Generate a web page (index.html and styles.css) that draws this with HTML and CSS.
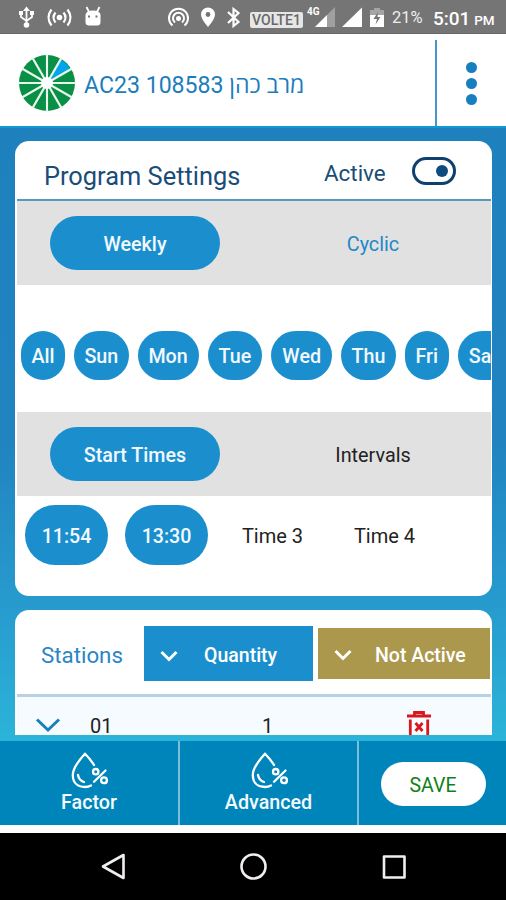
FILE: index.html
```html
<!DOCTYPE html>
<html lang="en">
<head>
<meta charset="utf-8">
<title>Program Settings</title>
<link rel="stylesheet" href="styles.css">
</head>
<body>
<div class="phone">
  <div class="status">
    <svg class="status-left" width="110" height="34" viewBox="0 0 110 34" fill="none" stroke="#fff" stroke-width="1.8">
      <path d="M26.500 9V25M21 13V17L26.500 21L32 17V13"/>
      <path d="M23 11L26.500 6.500L30 11ZM19 11H23V15H19ZM30 11H34V15H30Z" fill="#fff" stroke="none"/>
      <circle cx="26.500" cy="25" r="2.800" fill="#fff" stroke="none"/>
      <circle cx="59.500" cy="17.500" r="2.800" fill="#fff" stroke="none"/>
      <path d="M55.500 12.500Q51.500 17.500 55.500 22.500M63.500 12.500Q67.500 17.500 63.500 22.500M51.500 9.500Q45.500 17.500 51.500 25.500M67.500 9.500Q73.500 17.500 67.500 25.500" stroke-width="2.200"/>
      <path d="M85.500 15Q86 10.500 93 10.500T100.500 15V22Q100.500 25.500 97 25.500H89Q85.500 25.500 85.500 22Z" fill="#fff" stroke="none"/>
      <path d="M89 12L86.500 7M97 12L99.500 7"/>
      <path d="M88 16.500H90M95.500 16.500H97.500" stroke="#757575"/>
    </svg>
    <svg class="status-mid" width="76" height="34" viewBox="0 0 76 34" fill="none" stroke="#fff" stroke-width="2">
      <circle cx="11.500" cy="18.500" r="2.500" fill="#fff" stroke="none"/>
      <path d="M8 22.500A5.500 5.500 0 1 1 15 22.500M5.500 25.500A9.500 9.500 0 1 1 17.500 25.500"/>
      <path d="M41 27Q34 19 34 14.500A7 7 0 0 1 48 14.500Q48 19 41 27Z" fill="#fff" stroke="none"/>
      <circle cx="41" cy="14.500" r="2.400" fill="#757575" stroke="none"/>
      <path d="M61 12L71.500 22L66.500 26V9L71.500 13L61 23" stroke-width="2.200"/>
    </svg>
    <span class="volte">VOLTE1</span>
    <span class="net">4G</span>
    <svg class="signal" width="84" height="34" viewBox="0 0 84 34">
      <path d="M9 27L29 7V27Z" fill="#a0a0a0"/><path d="M9 27L21 15V27Z" fill="#fff"/>
      <path d="M36 27L56 7.500V27Z" fill="#fff"/>
      <path d="M64 10H68V8H74V10H78V15H64Z" fill="#a5a5a5"/><path d="M64 15H78V27H64Z" fill="#fff"/>
      <path d="M72 12L67.500 19H71L69.500 24.500L74.500 17H71.500Z" fill="#757575"/>
    </svg>
    <span class="battery">21%</span>
    <span class="clock">5:01 <small>PM</small></span>
  </div>

  <header class="header">
    <svg class="logo" width="58" height="58" viewBox="-29 -29 58 58">
      <circle r="28" fill="#0a9046"/>
      <path d="M0 0L13.500 -23.380A27 27 0 0 1 23.380 -13.500Z" fill="#05a5ee"/>
      <path d="M0-29V29M-29 0H29M-14.500-25.110L14.500 25.110M14.500-25.110L-14.500 25.110M-25.110-14.500L25.110 14.500M25.110-14.500L-25.110 14.500" stroke="#e9f8ec" stroke-width="2.100"/>
      <circle r="6" fill="#fff"/>
    </svg>
    <span class="title">AC23 108583 מרב כהן</span>
    <div class="more"><i></i><i></i><i></i></div>
  </header>

  <main class="main">
    <section class="card settings">
      <div class="card-head">
        <h1>Program Settings</h1>
        <span class="active">Active</span>
        <span class="toggle"></span>
      </div>
      <div class="band">
        <span class="pill">Weekly</span>
        <span class="option cyclic">Cyclic</span>
      </div>
      <div class="days">
        <span class="day narrow">All</span><span class="day">Sun</span><span class="day wide">Mon</span><span class="day">Tue</span><span class="day wide">Wed</span><span class="day">Thu</span><span class="day narrow">Fri</span><span class="day last">Sa</span>
      </div>
      <div class="band">
        <span class="pill start">Start Times</span>
        <span class="option intervals">Intervals</span>
      </div>
      <div class="times">
        <span class="time on">11:54</span><span class="time on">13:30</span><span class="time">Time 3</span><span class="time">Time 4</span>
      </div>
    </section>

    <section class="card stations">
      <div class="stations-head">
        <h2>Stations</h2>
        <span class="select quantity"><svg width="18" height="12" viewBox="0 0 18 12"><path d="M1.500 2L9 9.500L16.500 2"/></svg><b>Quantity</b></span>
        <span class="select inactive"><svg width="18" height="12" viewBox="0 0 18 12"><path d="M1.500 2L9 9.500L16.500 2"/></svg><b>Not Active</b></span>
      </div>
      <div class="station">
        <svg class="expand" width="26" height="15" viewBox="0 0 26 15"><path d="M2 1.500L13 12L24 1.500"/></svg>
        <span class="number">01</span>
        <span class="amount">1</span>
        <svg class="trash" width="24" height="28" viewBox="0 0 24 28" fill="none" stroke="#d9171d">
          <path d="M0 5H24M7.500 4.500V1.500H16.500V4.500" stroke-width="2.800"/>
          <path d="M3.300 8.500V26H20.700V8.500" stroke-width="2.800"/>
          <path d="M8.500 12L15.500 20M15.500 12L8.500 20" stroke-width="2.800"/>
        </svg>
      </div>
    </section>
  </main>

  <footer class="actions">
    <div class="action">
      <svg width="38" height="38" viewBox="0 0 38 38" fill="none" stroke="#fff" stroke-width="2.3" stroke-linecap="round">
        <path d="M24 13Q21 8 15 1.800Q2.800 15 2.800 23C2.800 31 8 35 15 35Q18.500 35 21 33.500"/>
        <path d="M8 23Q9 28.500 14 30M24 29.700L35.500 18.500"/>
        <circle cx="25.700" cy="19.700" r="2.700"/><circle cx="34" cy="28.300" r="2.900"/>
      </svg>
      <span>Factor</span>
    </div>
    <div class="action">
      <svg width="38" height="38" viewBox="0 0 38 38" fill="none" stroke="#fff" stroke-width="2.3" stroke-linecap="round">
        <path d="M24 13Q21 8 15 1.800Q2.800 15 2.800 23C2.800 31 8 35 15 35Q18.500 35 21 33.500"/>
        <path d="M8 23Q9 28.500 14 30M24 29.700L35.500 18.500"/>
        <circle cx="25.700" cy="19.700" r="2.700"/><circle cx="34" cy="28.300" r="2.900"/>
      </svg>
      <span>Advanced</span>
    </div>
    <div class="action save-cell"><span class="save">SAVE</span></div>
  </footer>

  <nav class="nav">
    <svg width="506" height="67" viewBox="0 0 506 67" fill="none" stroke="#f2eeee" stroke-width="2.600" stroke-linejoin="round">
      <path d="M123.500 22V45L103 33.500Z"/>
      <circle cx="253.500" cy="33.500" r="12"/>
      <rect x="384" y="23.500" width="20.500" height="21"/>
    </svg>
  </nav>
</div>
</body>
</html>
```
FILE: styles.css
```css
* { box-sizing: border-box; }

body {
  margin: 0;
  font-family: Roboto, "Open Sans", sans-serif;
  font-size: 20px;
  color: #222;
}

svg { display: block; flex: none; }

span, h1, h2, b { white-space: nowrap; }

.phone {
  width: 506px;
  height: 900px;
  overflow: hidden;
  display: flex;
  flex-direction: column;
  background: #fff;
}

.status {
  height: 34px;
  flex: none;
  display: flex;
  align-items: center;
  background: #757575;
  border-bottom: 1px solid #666;
  color: #fff;
}

.status-left { margin-right: 57px; }

.volte {
  width: 53px;
  height: 16px;
  margin: 6px 0 0 7px;
  border-radius: 2px;
  background: #e6e6e6;
  color: #686868;
  font-size: 14px;
  font-weight: 500;
  line-height: 17px;
  text-align: center;
}

.net {
  width: 14px;
  margin: -9px -10px 0 4px;
  font-size: 10px;
  font-weight: 700;
  line-height: 12px;
}

.signal { margin-left: -5px; }

.battery {
  width: 41px;
  margin: 2px 0 0 2px;
  font-size: 16.5px;
  color: #eee;
}

.clock { margin-top: 4px; font-size: 19px; font-weight: 500; }
.clock small { font-size: 13.5px; margin-left: -1px; }

.header {
  height: 92px;
  flex: none;
  display: flex;
  align-items: center;
  padding: 6px 0 0 18px;
}

.title {
  width: 350px;
  margin: 2px 0 0 8px;
  font-size: 23.1px;
  color: #1c7dbd;
}

.more {
  width: 71px;
  height: 86px;
  margin-left: 1px;
  border-left: 2px solid #4994cc;
  display: flex;
  flex-direction: column;
  align-items: center;
  justify-content: center;
  gap: 5px;
}

.more i {
  width: 11px;
  height: 11px;
  border-radius: 50%;
  background: #167fbf;
}

.main {
  height: 615px;
  flex: none;
  padding: 13px 14px 6px 15px;
  border-top: 2px solid #1199d3;
  background: linear-gradient(#1f80be 0%, #2184c1 52%, #279bce 78%, #2bb4d9 100%);
  display: flex;
  flex-direction: column;
  gap: 14px;
}

.card { background: #fff; border-radius: 14px; padding: 0 1px 0 2px; }

.settings { height: 455px; }

.card-head {
  height: 60px;
  display: flex;
  align-items: center;
  border-bottom: 2px solid #5599bd;
  color: #194d78;
}

h1 {
  width: 280px;
  margin: 11px 0 0 27px;
  font-size: 25.4px;
  font-weight: 400;
}

.active { width: 88px; margin-top: 5px; font-size: 22.4px; }

.toggle {
  width: 44px;
  height: 28px;
  margin-top: 2px;
  border: 3px solid #0e416e;
  border-radius: 14px;
  display: flex;
  align-items: center;
  justify-content: flex-end;
  padding-right: 5px;
}

.toggle::after {
  content: "";
  width: 12px;
  height: 12px;
  border-radius: 50%;
  background: #0e4c80;
}

.band {
  height: 84px;
  display: flex;
  align-items: center;
  padding-left: 33px;
  background: #e1e1e1;
}

.pill {
  width: 170px;
  height: 54px;
  border-radius: 27px;
  background: #1b8fce;
  color: #f1f9ff;
  font-size: 19.7px;
  font-weight: 500;
  line-height: 58px;
  text-align: center;
}

.option { width: 306px; text-align: center; margin: 2px -40px 0 0; font-size: 19.8px; }
.cyclic { color: #2488c7; }

.days {
  height: 127px;
  padding-left: 4px;
  display: flex;
  align-items: center;
  gap: 9px;
  overflow: hidden;
}

.day {
  width: 54.6px;
  height: 49px;
  margin-top: 14px;
  flex: none;
  border-radius: 25px;
  background: #1b8fce;
  color: #f1f9ff;
  font-size: 19.7px;
  font-weight: 500;
  line-height: 52px;
  text-align: center;
}

.narrow { width: 44px; }
.wide { width: 61px; }

.last {
  width: 34px;
  padding-left: 11px;
  border-radius: 25px 0 0 25px;
  text-align: left;
}

.times { display: flex; padding: 9px 0 0 8px; gap: 17px; }

.time {
  width: 95px;
  height: 60px;
  line-height: 62px;
  text-align: center;
}

.time.on {
  width: 83px;
  border-radius: 30px;
  background: #1b8fce;
  color: #f1f9ff;
  font-size: 19.6px;
  font-weight: 500;
  line-height: 64px;
}

.stations {
  height: 125px;
  border-radius: 14px 14px 0 0;
  overflow: hidden;
}

.stations-head {
  height: 87px;
  display: flex;
  align-items: center;
  border-bottom: 3px solid #b9d1e5;
}

h2 {
  width: 103px;
  margin: 5px 0 0 24px;
  font-size: 22.3px;
  font-weight: 400;
  color: #2a86c4;
}

.select {
  width: 169px;
  height: 55px;
  margin-top: 3px;
  padding-left: 16px;
  display: flex;
  align-items: center;
  color: #fff;
}

.select b { font-size: 19.5px; font-weight: 500; margin-top: 3px; }
.select svg { fill: none; stroke: #fff; stroke-width: 3; margin-top: 4px; }
.quantity { background: #1b8fce; }
.quantity b { margin-left: 26px; }
.inactive { width: 172px; height: 51px; margin-left: 5px; margin-top: 2px; background: #ab984d; }
.inactive b { margin-left: 23px; margin-top: 5px; }

.station { height: 38px; display: flex; background: #f5fbff; }
.expand { margin: 21px 0 0 18px; fill: none; stroke: #197fbd; stroke-width: 3; }
.number { width: 172px; height: 20px; margin: 18px 0 0 29px; line-height: 23px; }
.amount { width: 145px; height: 20px; margin-top: 18px; line-height: 23px; }
.trash { margin-top: 14px; }

.actions {
  height: 84px;
  flex: none;
  display: grid;
  grid-template-columns: 180px 179px 147px;
  background: #0085bb;
  color: #f4fbff;
}

.action {
  border-right: 2px solid #7ebedb;
  display: flex;
  flex-direction: column;
  align-items: center;
  padding-top: 11px;
}

.action span { font-size: 19.7px; font-weight: 500; line-height: 26px; }

.save-cell { border: 0; padding: 21px 0 0 1px; }

.action .save {
  width: 105px;
  height: 44px;
  border-radius: 22px;
  background: #fff;
  color: #118018;
  font-size: 19.5px;
  font-weight: 400;
  line-height: 48px;
  text-align: center;
}

.nav { height: 67px; flex: none; margin-top: 8px; background: #000; }
```
